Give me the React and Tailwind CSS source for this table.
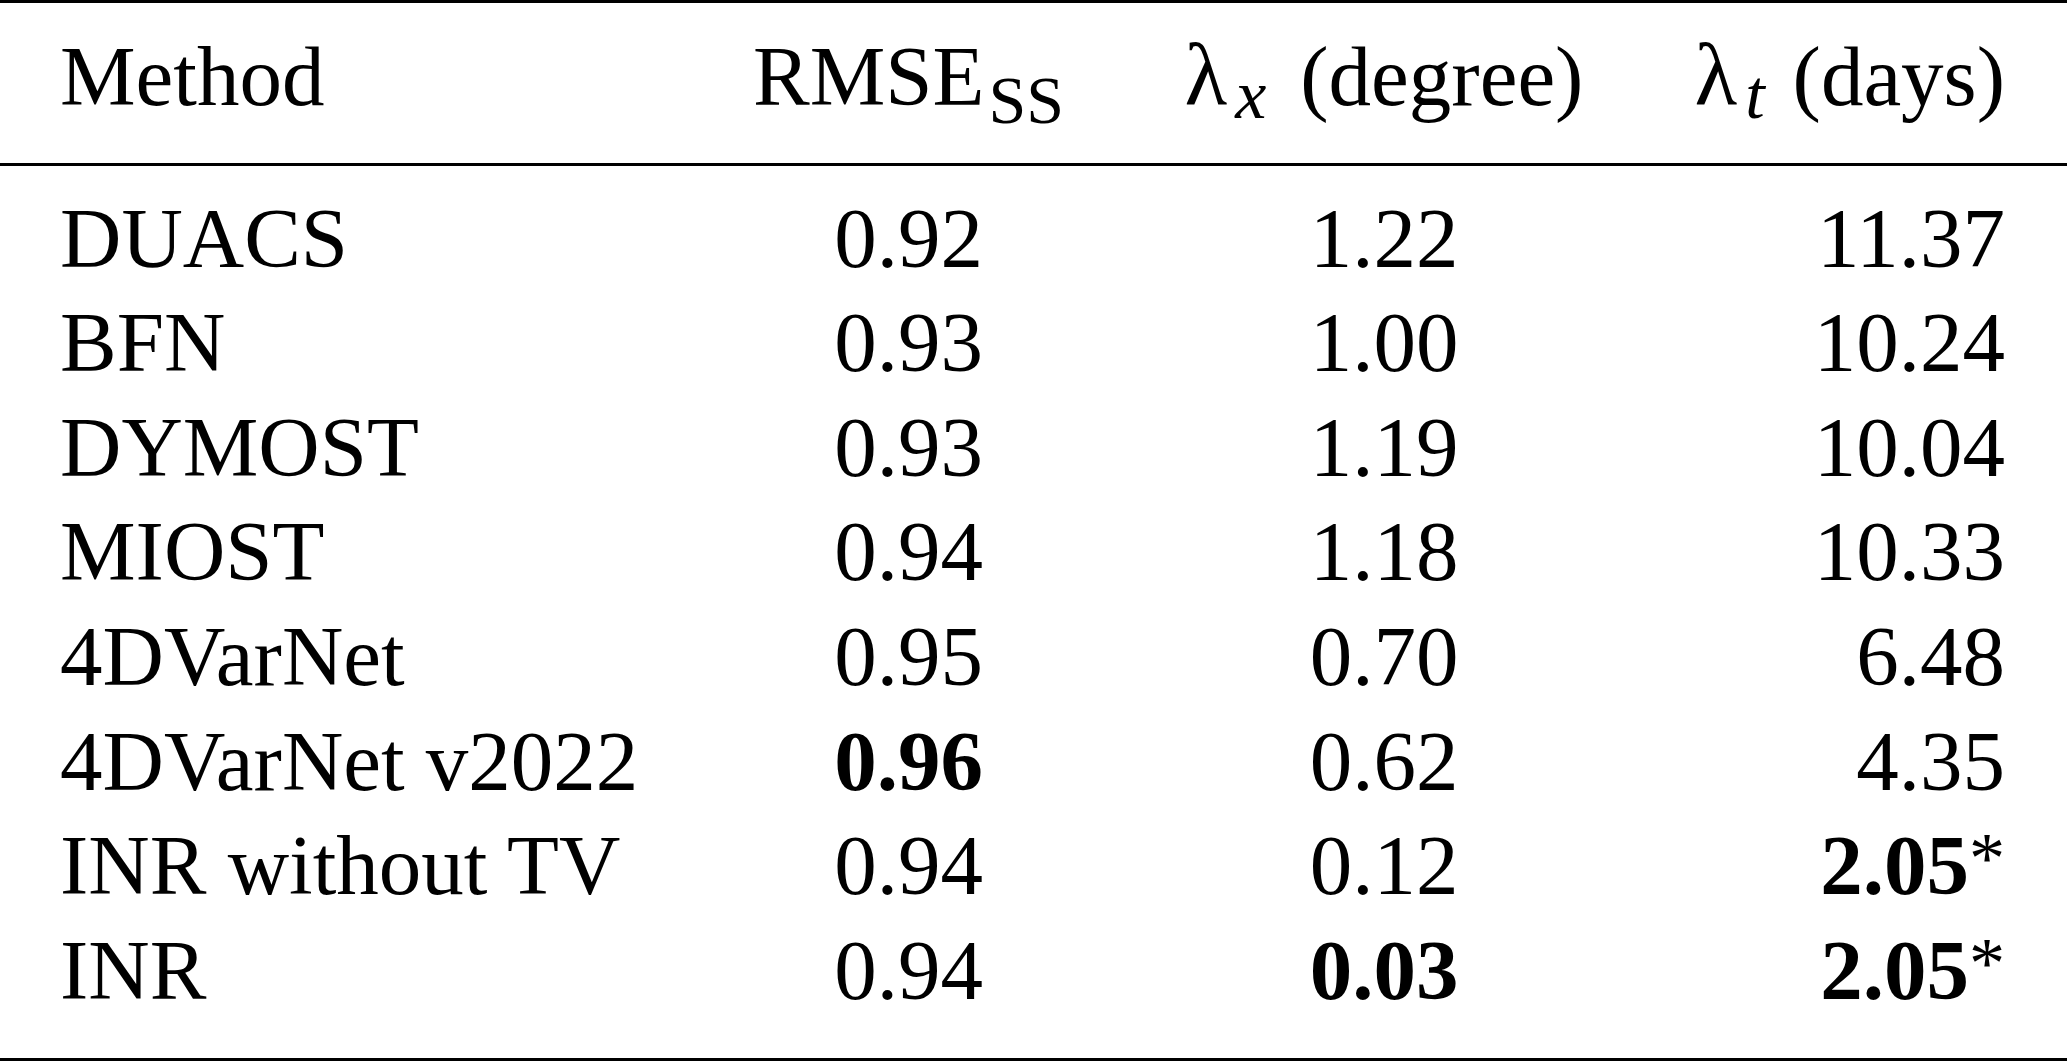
const rows = [
  { method: "DUACS", rmse: "0.92", lx: "1.22", lt: "11.37" },
  { method: "BFN", rmse: "0.93", lx: "1.00", lt: "10.24" },
  { method: "DYMOST", rmse: "0.93", lx: "1.19", lt: "10.04" },
  { method: "MIOST", rmse: "0.94", lx: "1.18", lt: "10.33" },
  { method: "4DVarNet", rmse: "0.95", lx: "0.70", lt: "6.48" },
  { method: "4DVarNet v2022", rmse: "0.96", lx: "0.62", lt: "4.35", boldRmse: true },
  { method: "INR without TV", rmse: "0.94", lx: "0.12", lt: "2.05", boldLt: true },
  { method: "INR", rmse: "0.94", lx: "0.03", lt: "2.05", boldLx: true, boldLt: true },
];

function Star() {
  return <span className="font-normal text-[72px] leading-[0] align-[12px]">*</span>;
}

export default function App() {
  return (
    <div className="h-[1063px] w-[2067px] bg-white font-['Liberation_Serif','Times_New_Roman',serif] text-[85px] leading-[104.6px] text-black">
      <div className="h-[3px] bg-black" />

      <div className="grid grid-cols-[693px_431px_520px_423px] pt-[21px] pb-[34px]">
        <div className="pl-[60px] text-left">Method</div>
        <div className="text-center">
          RMSE<span className="ml-[4px] text-[68px] leading-[0] align-[-18px]">SS</span>
        </div>
        <div className="text-center whitespace-nowrap">
          <span className="text-[88px]">λ</span>
          <span className="ml-[8px] italic text-[70px] leading-[0] align-[-13px]">x</span>
          <span className="ml-[34px]">(degree)</span>
        </div>
        <div className="pr-[62px] text-right whitespace-nowrap">
          <span className="text-[88px]">λ</span>
          <span className="ml-[8px] italic text-[70px] leading-[0] align-[-13px]">t</span>
          <span className="ml-[28px]">(days)</span>
        </div>
      </div>

      <div className="h-[3px] bg-black" />

      <div className="grid grid-cols-[693px_431px_520px_423px] pt-[20px] pb-[36px]">
        {rows.map((r) => (
          <div key={r.method + r.lx} className="contents">
            <div className="pl-[60px] text-left whitespace-nowrap">{r.method}</div>
            <div className={`text-center ${r.boldRmse ? "font-bold" : ""}`}>{r.rmse}</div>
            <div className={`text-center ${r.boldLx ? "font-bold" : ""}`}>{r.lx}</div>
            <div className="pr-[62px] text-right">
              {r.boldLt ? (
                <>
                  <span className="font-bold">{r.lt}</span>
                  <Star />
                </>
              ) : (
                r.lt
              )}
            </div>
          </div>
        ))}
      </div>

      <div className="h-[3px] bg-black" />
    </div>
  );
}
